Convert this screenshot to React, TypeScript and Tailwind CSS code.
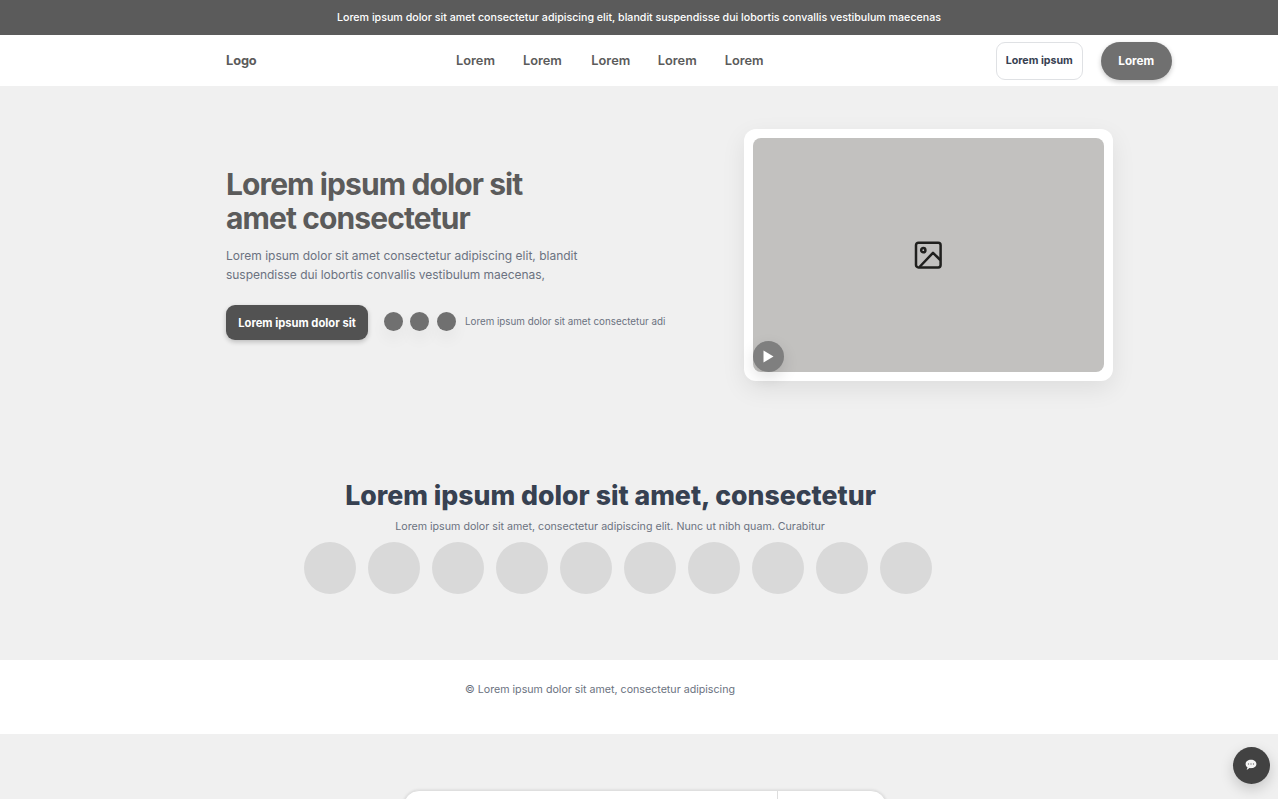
const navItems = [
  { label: "Lorem", space: "ml-0" },
  { label: "Lorem", space: "ml-[28px]" },
  { label: "Lorem", space: "ml-[29.5px]" },
  { label: "Lorem", space: "ml-[27.5px]" },
  { label: "Lorem", space: "ml-[28px]" },
];

function Header() {
  return (
    <header className="flex h-[51px] items-center bg-white pl-[226px] text-[12.8px] font-semibold text-[#5b5b5b]">
      <div className="w-[230px] text-[12.8px] font-bold tracking-[-0.1px]">Logo</div>
      <nav className="flex w-[539.5px]">
        {navItems.map((item, i) => (
          <a key={i} className={item.space}>{item.label}</a>
        ))}
      </nav>
      <button className="h-[38px] w-[87.5px] rounded-[9px] border border-[#dfe1e4] text-[10.67px] font-bold text-[#374151]">
        Lorem ipsum
      </button>
      <button className="ml-[17.5px] h-[38px] w-[71.5px] rounded-full bg-[#707070] pt-[2px] text-[11.7px] font-bold text-white shadow-[0_2px_5px_rgba(0,0,0,0.22)]">
        Lorem
      </button>
    </header>
  );
}

function ImageIcon() {
  return (
    <svg width="28" height="28" viewBox="0 0 28 28" fill="none" stroke="#20201e" strokeWidth="2.5" strokeLinejoin="round">
      <rect x="2" y="1.8" width="24.6" height="24.6" rx="2.4" />
      <circle cx="9.3" cy="9.2" r="2.1" />
      <path d="M5.5 26 19 11.8l7.3 7.2" />
    </svg>
  );
}

function Hero() {
  return (
    <section className="flex h-[384px] pl-[226px]">
      <div className="w-[517.5px] pt-[81px]">
        <h1 className="text-[30px] leading-[34px] font-bold tracking-[-0.9px] whitespace-nowrap text-[#5b5b5b]">
          Lorem ipsum dolor sit
          <br />
          amet consectetur
        </h1>
        <p className="mt-[11px] text-[12px] leading-[19px] whitespace-nowrap text-[#6b7280]">
          Lorem ipsum dolor sit amet consectetur adipiscing elit, blandit
          <br />
          <span className="tracking-[-0.03px]">suspendisse dui lobortis convallis vestibulum maecenas,</span>
        </p>
        <div className="mt-[21px] flex h-[35px] items-center">
          <button className="h-[35px] w-[142px] rounded-[9px] bg-[#525252] pt-px text-[11.2px] font-bold whitespace-nowrap text-white shadow-[0_2px_5px_rgba(0,0,0,0.22)]">
            Lorem ipsum dolor sit
          </button>
          <div className="mb-[2px] ml-4 flex">
            <span className="size-[19px] rounded-full bg-[#707070] shadow-[0_8px_16px_rgba(0,0,0,0.05)]" />
            <span className="ml-[7px] size-[19px] rounded-full bg-[#707070] shadow-[0_8px_16px_rgba(0,0,0,0.05)]" />
            <span className="ml-2 size-[19px] rounded-full bg-[#707070] shadow-[0_8px_16px_rgba(0,0,0,0.05)]" />
          </div>
          <span className="ml-[9px] text-[9.8px] whitespace-nowrap text-[#6b7280]">
            Lorem ipsum dolor sit amet consectetur adi
          </span>
        </div>
      </div>
      <div className="relative mt-[42.5px] h-[252.5px] w-[369.5px] rounded-[12px] bg-white p-[9.5px] shadow-[0_8px_24px_rgba(0,0,0,0.08)]">
        <div className="flex h-[233.5px] items-center justify-center rounded-[8px] bg-[#c2c1bf]">
          <ImageIcon />
        </div>
        <button className="absolute bottom-[9.5px] left-[9.5px] flex size-[31px] items-center justify-center rounded-full bg-[#7f7f7f] shadow-[0_6px_16px_rgba(0,0,0,0.12)]">
          <svg width="11" height="13" viewBox="0 0 11 13" fill="white">
            <path d="M.5.5v12l10-6z" />
          </svg>
        </button>
      </div>
    </section>
  );
}

function Showcase() {
  return (
    <section className="flex h-[190px] flex-col pt-[8px] pl-[304px]">
      <div className="flex w-[613px] flex-col items-center whitespace-nowrap">
        <h2 className="text-[26.67px] leading-[34px] font-extrabold text-[#374151]">
          Lorem ipsum dolor sit amet, consectetur
        </h2>
        <p className="mt-[7px] mr-px text-[10.67px] leading-4 text-[#6b7280]">
          Lorem ipsum dolor sit amet, consectetur adipiscing elit. Nunc ut nibh quam. Curabitur
        </p>
      </div>
      <div className="mt-[7px] flex gap-3">
        {Array.from({ length: 10 }, (_, i) => (
          <span key={i} className="size-[52px] rounded-full bg-[#d9d9d9]" />
        ))}
      </div>
    </section>
  );
}

export default function App() {
  return (
    <div className="relative h-[799px] w-[1278px] overflow-hidden bg-[#f0f0f0] font-['Inter',sans-serif]">
      <div className="flex h-[35px] items-center justify-center bg-[#5b5b5b] text-[10.67px] font-medium text-white">
        Lorem ipsum dolor sit amet consectetur adipiscing elit, blandit suspendisse dui lobortis convallis vestibulum maecenas
      </div>
      <Header />
      <Hero />
      <Showcase />
      <footer className="h-[73.5px] bg-white pt-[22px] pl-[465px] text-[10.67px] leading-4 text-[#6b7280]">
        © Lorem ipsum dolor sit amet, consectetur adipiscing
      </footer>
      <div className="mt-[56.5px] ml-[403px] flex h-[50px] w-[484px] rounded-[16px] border border-[#dfdfdf] bg-white shadow-[0_0_3px_rgba(0,0,0,0.12)]">
        <div className="w-[374px] border-r border-[#dedede]" />
      </div>
      <button className="absolute top-[746.5px] left-[1232.5px] flex size-[37.5px] items-center justify-center rounded-full bg-[#424242] shadow-[0_5px_14px_rgba(0,0,0,0.18)]">
        <svg width="12" height="12" viewBox="0 0 12 12">
          <path d="M6 .8C2.9.8.6 2.5.6 5c0 1.5.7 2.6 1.9 3.3L1.7 11l2.8-1.9c3.9.5 6.9-1.2 6.9-4.1C11.4 2.5 9.1.8 6 .8Z" fill="#f5f5f5" />
          <g fill="#777">
            <circle cx="3.5" cy="5" r=".65" />
            <circle cx="6" cy="5" r=".65" />
            <circle cx="8.5" cy="5" r=".65" />
          </g>
        </svg>
      </button>
    </div>
  );
}
